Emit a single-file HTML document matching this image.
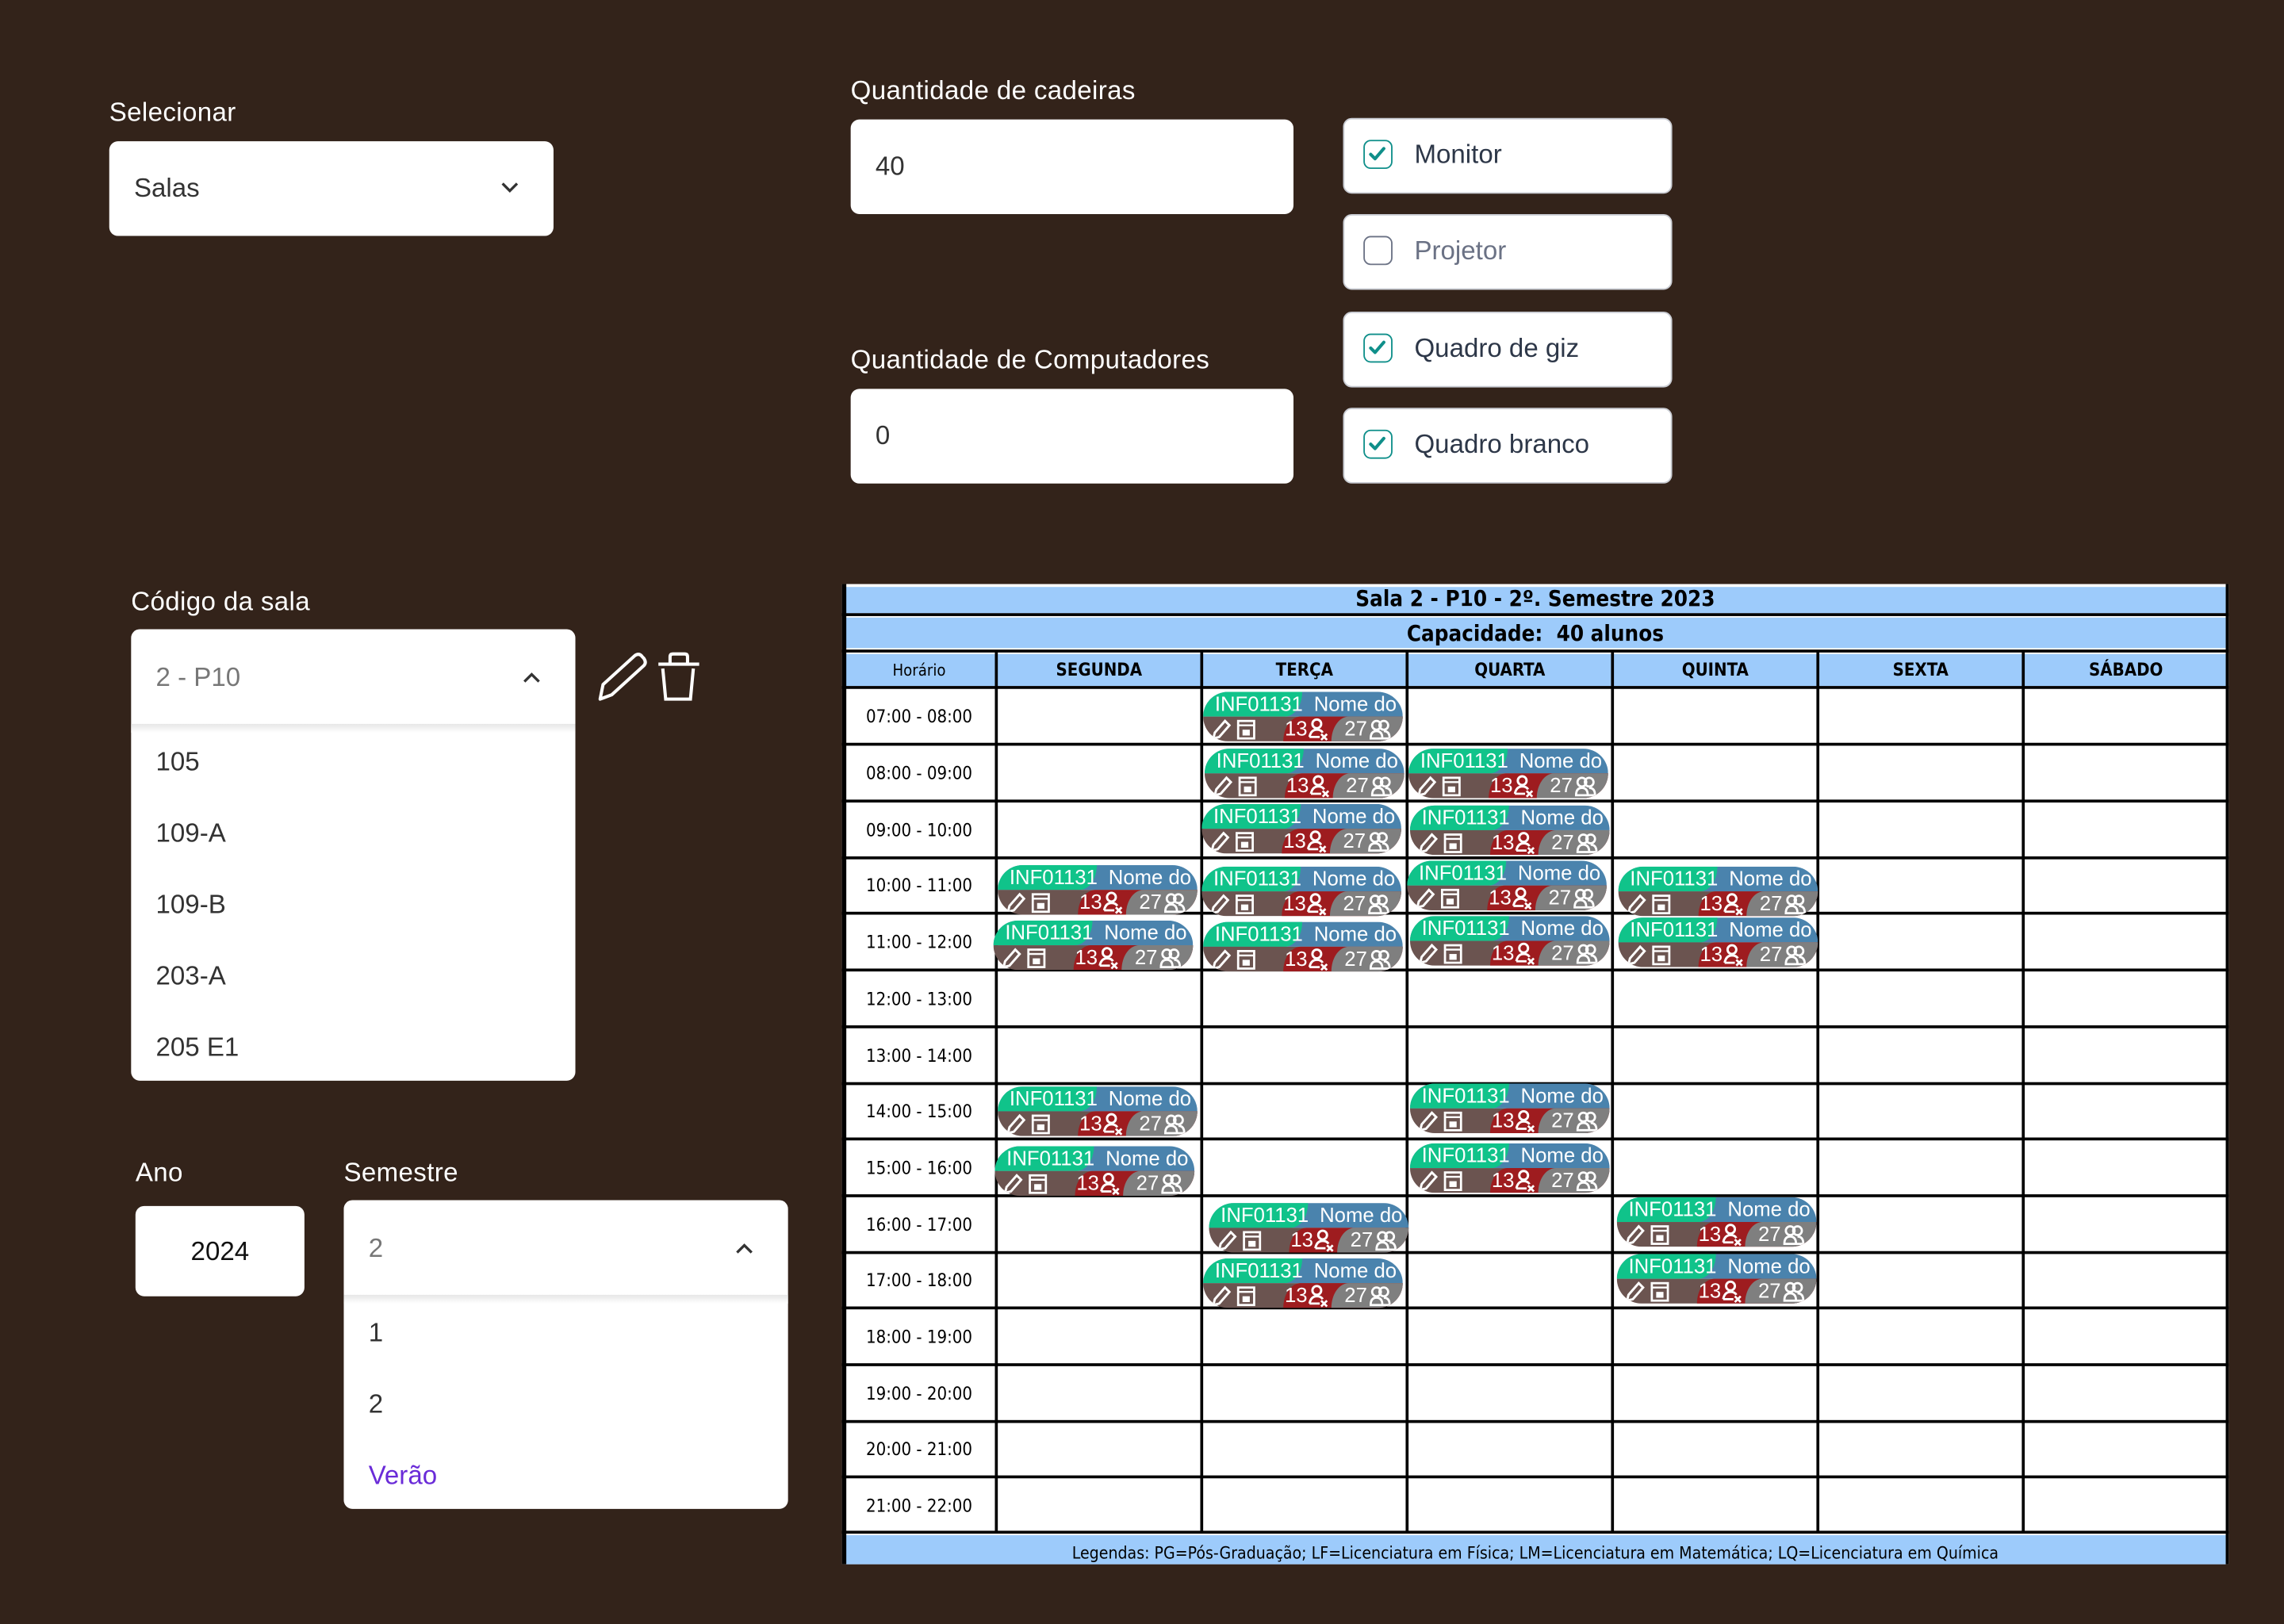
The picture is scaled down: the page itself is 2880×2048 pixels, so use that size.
<!DOCTYPE html>
<html><head><meta charset="utf-8"><style>
html,body{margin:0;padding:0;background:#33231a;width:2880px;height:2048px;overflow:hidden}
#w{position:absolute;left:0;top:0;width:1568px;height:1115px;transform:scale(1.836735);transform-origin:0 0;font-family:"Liberation Sans",sans-serif}
.a{position:absolute}
.lbl{position:absolute;color:#fff;font-size:18px;letter-spacing:.2px}
.box{position:absolute;background:#fff;border-radius:6px;box-sizing:border-box;color:#333;font-size:18px}
.chk{position:absolute;left:922px;width:226px;height:52px;background:#fff;border-radius:6px;border:1px solid #c9ccd3;box-sizing:border-box}
.chk .cb{position:absolute;left:13px;top:14px;width:20px;height:20px;border:1.5px solid #0f8f8a;border-radius:5px;box-sizing:border-box}
.chk .cb.off{border-color:#6b7285}
.chk span{position:absolute;left:48px;top:14px;font-size:18px;color:#2d3748}
.tbl{position:absolute;left:578px;top:401px;width:952px;height:673px;background:#fff}
.hl{position:absolute;background:#000}
.bl{position:absolute;background:#9dcbfb}
.tt{position:absolute;font-family:"DejaVu Sans Condensed","Liberation Sans Narrow",sans-serif;font-size:12px;color:#000;text-align:center}
.c{position:absolute;width:137px;height:34px;border-radius:17px;overflow:hidden;font-size:14px;color:#fff}
.c .t{position:absolute;left:0;top:0;width:100%;height:17px;background:#4a83ad}
.c .g{position:absolute;left:0;top:0;width:68px;height:17px;background:#10c38a;border-bottom-right-radius:12px 17px}
.c .t1{position:absolute;left:8px;top:0px}
.c .t2{position:absolute;left:76px;top:0px}
.c .bt{position:absolute;left:0;top:17px;width:100%;height:17px;background:#6b5450}
.c .r{position:absolute;left:55px;top:0;width:90px;height:17px;background:#9e1c1f;border-top-left-radius:12px 17px}
.c .gr{position:absolute;left:88px;top:0;width:60px;height:17px;background:#7f7f7f;border-top-left-radius:12px 17px}
.c .n1{position:absolute;left:56px;top:0px}
.c .n2{position:absolute;left:97px;top:0px}
.c svg{position:absolute}
</style></head><body><div id="w">
<svg width="0" height="0" style="position:absolute"><defs>
<g id="pen"><path d="M2 14 L3 10 L10 2 L13 5 L6 13 Z" fill="none" stroke="#fff" stroke-width="1.6"/></g>
<g id="lk"><rect x="1" y="1" width="11" height="12" fill="none" stroke="#fff" stroke-width="1.5"/><line x1="1" y1="4" x2="12" y2="4" stroke="#fff" stroke-width="1.3"/><rect x="4" y="7" width="5" height="4" fill="#fff"/></g>
<g id="p1"><circle cx="6" cy="4" r="3" fill="none" stroke="#fff" stroke-width="1.6"/><path d="M1 13 Q2 8 6 8 Q9 8 10 10" fill="none" stroke="#fff" stroke-width="1.6"/><path d="M1 13 H8 M9 11 L13 15 M13 11 L9 15" stroke="#fff" stroke-width="1.5"/></g>
<g id="p2"><circle cx="5" cy="4" r="3" fill="none" stroke="#fff" stroke-width="1.5"/><circle cx="10" cy="4" r="3" fill="none" stroke="#fff" stroke-width="1.5"/><path d="M1 13 Q1 8 5 8 Q9 8 9 13 Z M9 13 H14 Q14 8 10 8" fill="none" stroke="#fff" stroke-width="1.5"/></g>
</defs></svg>

<div class="lbl" style="left:75px;top:67px">Selecionar</div>
<div class="box" style="left:75px;top:97px;width:305px;height:65px"><span class="a" style="left:17px;top:22px">Salas</span>
<svg class="a" style="left:268px;top:27px" width="14" height="10"><path d="M2 2 L7 7 L12 2" fill="none" stroke="#333" stroke-width="1.8"/></svg></div>

<div class="lbl" style="left:584px;top:52px">Quantidade de cadeiras</div>
<div class="box" style="left:584px;top:82px;width:304px;height:65px"><span class="a" style="left:17px;top:22px">40</span></div>
<div class="lbl" style="left:584px;top:237px">Quantidade de Computadores</div>
<div class="box" style="left:584px;top:267px;width:304px;height:65px"><span class="a" style="left:17px;top:22px">0</span></div>

<div class="chk" style="top:81px"><div class="cb"><svg width="17" height="17" style="position:absolute;left:0;top:0"><path d="M4 9 L7 12 L13 5" fill="none" stroke="#0f8f8a" stroke-width="2.2" stroke-linecap="round" stroke-linejoin="round"/></svg></div><span>Monitor</span></div>
<div class="chk" style="top:147px"><div class="cb off"></div><span style="color:#6b7285">Projetor</span></div>
<div class="chk" style="top:214px"><div class="cb"><svg width="17" height="17" style="position:absolute;left:0;top:0"><path d="M4 9 L7 12 L13 5" fill="none" stroke="#0f8f8a" stroke-width="2.2" stroke-linecap="round" stroke-linejoin="round"/></svg></div><span>Quadro de giz</span></div>
<div class="chk" style="top:280px"><div class="cb"><svg width="17" height="17" style="position:absolute;left:0;top:0"><path d="M4 9 L7 12 L13 5" fill="none" stroke="#0f8f8a" stroke-width="2.2" stroke-linecap="round" stroke-linejoin="round"/></svg></div><span>Quadro branco</span></div>

<div class="lbl" style="left:90px;top:403px">Código da sala</div>
<div class="box" style="left:90px;top:432px;width:305px;height:310px;border-radius:6px"></div>
<div class="a" style="left:90px;top:497px;width:305px;height:6px;background:linear-gradient(#e6e6e6,#fff)"></div>
<span class="a" style="left:107px;top:455px;font-size:18px;color:#777">2 - P10</span>
<svg class="a" style="left:358px;top:460px" width="14" height="10"><path d="M2 8 L7 3 L12 8" fill="none" stroke="#333" stroke-width="1.8"/></svg>
<div class="a" style="left:107px;top:499px;font-size:18px;color:#333;line-height:49px">105<br>109-A<br>109-B<br>203-A<br>205 E1</div>
<svg class="a" style="left:408px;top:446px" width="80" height="40"><path d="M4 34 L6 24 L28 4 Q31 2 33 5 L34 6 Q36 9 34 11 L12 31 Z" fill="none" stroke="#fff" stroke-width="2.2" stroke-linejoin="round"/><path d="M44 10 H72 M52 10 V5 Q52 3 54 3 H62 Q64 3 64 5 V10 M47 13 L49 34 H66 L68 13" fill="none" stroke="#fff" stroke-width="2.2"/></svg>

<div class="lbl" style="left:93px;top:795px">Ano</div>
<div class="box" style="left:93px;top:828px;width:116px;height:62px;text-align:center;line-height:62px;color:#111">2024</div>
<div class="lbl" style="left:236px;top:795px">Semestre</div>
<div class="box" style="left:236px;top:824px;width:305px;height:212px"></div>
<div class="a" style="left:236px;top:889px;width:305px;height:6px;background:linear-gradient(#e6e6e6,#fff)"></div>
<span class="a" style="left:253px;top:847px;font-size:18px;color:#777">2</span>
<svg class="a" style="left:504px;top:852px" width="14" height="10"><path d="M2 8 L7 3 L12 8" fill="none" stroke="#333" stroke-width="1.8"/></svg>
<div class="a" style="left:253px;top:891px;font-size:18px;color:#333;line-height:49px">1<br>2<br><span style="color:#6a2bd8">Verão</span></div>

<div class="tbl">
<div class="bl" style="left:2px;top:2px;width:948px;height:18px"></div>
<div class="bl" style="left:2px;top:23px;width:948px;height:21px"></div>
<div class="bl" style="left:2px;top:48px;width:948px;height:22px"></div>
<div class="bl" style="left:2px;top:653px;width:948px;height:20px"></div>
</div>
<div class="tt" style="left:578px;top:402px;width:952px;font-weight:bold;font-size:15px">Sala 2 - P10 - 2º. Semestre 2023</div>
<div class="tt" style="left:578px;top:426px;width:952px;font-weight:bold;font-size:15px">Capacidade:&nbsp; 40 alunos</div>
<div class="tt" style="left:578px;top:454px;width:106px;font-size:11px">Horário</div>
<div class="tt" style="left:684px;top:453px;width:141px;font-weight:bold">SEGUNDA</div>
<div class="tt" style="left:825px;top:453px;width:141px;font-weight:bold">TERÇA</div>
<div class="tt" style="left:966px;top:453px;width:141px;font-weight:bold">QUARTA</div>
<div class="tt" style="left:1107px;top:453px;width:141px;font-weight:bold">QUINTA</div>
<div class="tt" style="left:1248px;top:453px;width:141px;font-weight:bold">SEXTA</div>
<div class="tt" style="left:1389px;top:453px;width:141px;font-weight:bold">SÁBADO</div>
<div class="tt" style="left:578px;top:1059px;width:952px;font-size:11.5px">Legendas: PG=Pós-Graduação; LF=Licenciatura em Física; LM=Licenciatura em Matemática; LQ=Licenciatura em Química</div>

<div class="hl" style="left:578px;top:421px;width:952px;height:2px"></div>
<div class="hl" style="left:578px;top:446px;width:952px;height:2px"></div>
<div class="hl" style="left:578px;top:471px;width:952px;height:2px"></div>
<div class="hl" style="left:578px;top:510px;width:952px;height:2px"></div>
<div class="hl" style="left:578px;top:549px;width:952px;height:2px"></div>
<div class="hl" style="left:578px;top:588px;width:952px;height:2px"></div>
<div class="hl" style="left:578px;top:626px;width:952px;height:2px"></div>
<div class="hl" style="left:578px;top:665px;width:952px;height:2px"></div>
<div class="hl" style="left:578px;top:704px;width:952px;height:2px"></div>
<div class="hl" style="left:578px;top:743px;width:952px;height:2px"></div>
<div class="hl" style="left:578px;top:781px;width:952px;height:2px"></div>
<div class="hl" style="left:578px;top:820px;width:952px;height:2px"></div>
<div class="hl" style="left:578px;top:859px;width:952px;height:2px"></div>
<div class="hl" style="left:578px;top:897px;width:952px;height:2px"></div>
<div class="hl" style="left:578px;top:936px;width:952px;height:2px"></div>
<div class="hl" style="left:578px;top:975px;width:952px;height:2px"></div>
<div class="hl" style="left:578px;top:1013px;width:952px;height:2px"></div>
<div class="hl" style="left:578px;top:1051px;width:952px;height:2px"></div>
<div class="hl" style="left:578px;top:401px;width:3px;height:673px"></div>
<div class="hl" style="left:1528px;top:401px;width:2px;height:673px"></div>
<div class="hl" style="left:683px;top:447px;width:2px;height:605px"></div>
<div class="hl" style="left:824px;top:447px;width:2px;height:605px"></div>
<div class="hl" style="left:965px;top:447px;width:2px;height:605px"></div>
<div class="hl" style="left:1106px;top:447px;width:2px;height:605px"></div>
<div class="hl" style="left:1247px;top:447px;width:2px;height:605px"></div>
<div class="hl" style="left:1388px;top:447px;width:2px;height:605px"></div>

<div class="tt" style="left:578px;top:485px;width:106px">07:00 - 08:00</div>
<div class="tt" style="left:578px;top:524px;width:106px">08:00 - 09:00</div>
<div class="tt" style="left:578px;top:563px;width:106px">09:00 - 10:00</div>
<div class="tt" style="left:578px;top:601px;width:106px">10:00 - 11:00</div>
<div class="tt" style="left:578px;top:640px;width:106px">11:00 - 12:00</div>
<div class="tt" style="left:578px;top:679px;width:106px">12:00 - 13:00</div>
<div class="tt" style="left:578px;top:718px;width:106px">13:00 - 14:00</div>
<div class="tt" style="left:578px;top:756px;width:106px">14:00 - 15:00</div>
<div class="tt" style="left:578px;top:795px;width:106px">15:00 - 16:00</div>
<div class="tt" style="left:578px;top:834px;width:106px">16:00 - 17:00</div>
<div class="tt" style="left:578px;top:872px;width:106px">17:00 - 18:00</div>
<div class="tt" style="left:578px;top:911px;width:106px">18:00 - 19:00</div>
<div class="tt" style="left:578px;top:950px;width:106px">19:00 - 20:00</div>
<div class="tt" style="left:578px;top:988px;width:106px">20:00 - 21:00</div>
<div class="tt" style="left:578px;top:1027px;width:106px">21:00 - 22:00</div>

<div class="c" style="left:826px;top:475px"><div class="t"><div class="g"></div><span class="t1">INF01131</span><span class="t2">Nome do</span></div><div class="bt"><div class="r"></div><div class="gr"></div><svg style="left:5px;top:1px" width="15" height="16"><use href="#pen"/></svg><svg style="left:23px;top:2px" width="14" height="15"><use href="#lk"/></svg><span class="n1">13</span><svg style="left:72px;top:1px" width="15" height="16"><use href="#p1"/></svg><span class="n2">27</span><svg style="left:114px;top:2px" width="15" height="15"><use href="#p2"/></svg></div></div>
<div class="c" style="left:827px;top:514px"><div class="t"><div class="g"></div><span class="t1">INF01131</span><span class="t2">Nome do</span></div><div class="bt"><div class="r"></div><div class="gr"></div><svg style="left:5px;top:1px" width="15" height="16"><use href="#pen"/></svg><svg style="left:23px;top:2px" width="14" height="15"><use href="#lk"/></svg><span class="n1">13</span><svg style="left:72px;top:1px" width="15" height="16"><use href="#p1"/></svg><span class="n2">27</span><svg style="left:114px;top:2px" width="15" height="15"><use href="#p2"/></svg></div></div>
<div class="c" style="left:825px;top:552px"><div class="t"><div class="g"></div><span class="t1">INF01131</span><span class="t2">Nome do</span></div><div class="bt"><div class="r"></div><div class="gr"></div><svg style="left:5px;top:1px" width="15" height="16"><use href="#pen"/></svg><svg style="left:23px;top:2px" width="14" height="15"><use href="#lk"/></svg><span class="n1">13</span><svg style="left:72px;top:1px" width="15" height="16"><use href="#p1"/></svg><span class="n2">27</span><svg style="left:114px;top:2px" width="15" height="15"><use href="#p2"/></svg></div></div>
<div class="c" style="left:825px;top:595px"><div class="t"><div class="g"></div><span class="t1">INF01131</span><span class="t2">Nome do</span></div><div class="bt"><div class="r"></div><div class="gr"></div><svg style="left:5px;top:1px" width="15" height="16"><use href="#pen"/></svg><svg style="left:23px;top:2px" width="14" height="15"><use href="#lk"/></svg><span class="n1">13</span><svg style="left:72px;top:1px" width="15" height="16"><use href="#p1"/></svg><span class="n2">27</span><svg style="left:114px;top:2px" width="15" height="15"><use href="#p2"/></svg></div></div>
<div class="c" style="left:826px;top:633px"><div class="t"><div class="g"></div><span class="t1">INF01131</span><span class="t2">Nome do</span></div><div class="bt"><div class="r"></div><div class="gr"></div><svg style="left:5px;top:1px" width="15" height="16"><use href="#pen"/></svg><svg style="left:23px;top:2px" width="14" height="15"><use href="#lk"/></svg><span class="n1">13</span><svg style="left:72px;top:1px" width="15" height="16"><use href="#p1"/></svg><span class="n2">27</span><svg style="left:114px;top:2px" width="15" height="15"><use href="#p2"/></svg></div></div>
<div class="c" style="left:830px;top:826px"><div class="t"><div class="g"></div><span class="t1">INF01131</span><span class="t2">Nome do</span></div><div class="bt"><div class="r"></div><div class="gr"></div><svg style="left:5px;top:1px" width="15" height="16"><use href="#pen"/></svg><svg style="left:23px;top:2px" width="14" height="15"><use href="#lk"/></svg><span class="n1">13</span><svg style="left:72px;top:1px" width="15" height="16"><use href="#p1"/></svg><span class="n2">27</span><svg style="left:114px;top:2px" width="15" height="15"><use href="#p2"/></svg></div></div>
<div class="c" style="left:826px;top:864px"><div class="t"><div class="g"></div><span class="t1">INF01131</span><span class="t2">Nome do</span></div><div class="bt"><div class="r"></div><div class="gr"></div><svg style="left:5px;top:1px" width="15" height="16"><use href="#pen"/></svg><svg style="left:23px;top:2px" width="14" height="15"><use href="#lk"/></svg><span class="n1">13</span><svg style="left:72px;top:1px" width="15" height="16"><use href="#p1"/></svg><span class="n2">27</span><svg style="left:114px;top:2px" width="15" height="15"><use href="#p2"/></svg></div></div>

<div class="c" style="left:685px;top:594px"><div class="t"><div class="g"></div><span class="t1">INF01131</span><span class="t2">Nome do</span></div><div class="bt"><div class="r"></div><div class="gr"></div><svg style="left:5px;top:1px" width="15" height="16"><use href="#pen"/></svg><svg style="left:23px;top:2px" width="14" height="15"><use href="#lk"/></svg><span class="n1">13</span><svg style="left:72px;top:1px" width="15" height="16"><use href="#p1"/></svg><span class="n2">27</span><svg style="left:114px;top:2px" width="15" height="15"><use href="#p2"/></svg></div></div>
<div class="c" style="left:682px;top:632px"><div class="t"><div class="g"></div><span class="t1">INF01131</span><span class="t2">Nome do</span></div><div class="bt"><div class="r"></div><div class="gr"></div><svg style="left:5px;top:1px" width="15" height="16"><use href="#pen"/></svg><svg style="left:23px;top:2px" width="14" height="15"><use href="#lk"/></svg><span class="n1">13</span><svg style="left:72px;top:1px" width="15" height="16"><use href="#p1"/></svg><span class="n2">27</span><svg style="left:114px;top:2px" width="15" height="15"><use href="#p2"/></svg></div></div>
<div class="c" style="left:685px;top:746px"><div class="t"><div class="g"></div><span class="t1">INF01131</span><span class="t2">Nome do</span></div><div class="bt"><div class="r"></div><div class="gr"></div><svg style="left:5px;top:1px" width="15" height="16"><use href="#pen"/></svg><svg style="left:23px;top:2px" width="14" height="15"><use href="#lk"/></svg><span class="n1">13</span><svg style="left:72px;top:1px" width="15" height="16"><use href="#p1"/></svg><span class="n2">27</span><svg style="left:114px;top:2px" width="15" height="15"><use href="#p2"/></svg></div></div>
<div class="c" style="left:683px;top:787px"><div class="t"><div class="g"></div><span class="t1">INF01131</span><span class="t2">Nome do</span></div><div class="bt"><div class="r"></div><div class="gr"></div><svg style="left:5px;top:1px" width="15" height="16"><use href="#pen"/></svg><svg style="left:23px;top:2px" width="14" height="15"><use href="#lk"/></svg><span class="n1">13</span><svg style="left:72px;top:1px" width="15" height="16"><use href="#p1"/></svg><span class="n2">27</span><svg style="left:114px;top:2px" width="15" height="15"><use href="#p2"/></svg></div></div>

<div class="c" style="left:967px;top:514px"><div class="t"><div class="g"></div><span class="t1">INF01131</span><span class="t2">Nome do</span></div><div class="bt"><div class="r"></div><div class="gr"></div><svg style="left:5px;top:1px" width="15" height="16"><use href="#pen"/></svg><svg style="left:23px;top:2px" width="14" height="15"><use href="#lk"/></svg><span class="n1">13</span><svg style="left:72px;top:1px" width="15" height="16"><use href="#p1"/></svg><span class="n2">27</span><svg style="left:114px;top:2px" width="15" height="15"><use href="#p2"/></svg></div></div>
<div class="c" style="left:968px;top:553px"><div class="t"><div class="g"></div><span class="t1">INF01131</span><span class="t2">Nome do</span></div><div class="bt"><div class="r"></div><div class="gr"></div><svg style="left:5px;top:1px" width="15" height="16"><use href="#pen"/></svg><svg style="left:23px;top:2px" width="14" height="15"><use href="#lk"/></svg><span class="n1">13</span><svg style="left:72px;top:1px" width="15" height="16"><use href="#p1"/></svg><span class="n2">27</span><svg style="left:114px;top:2px" width="15" height="15"><use href="#p2"/></svg></div></div>
<div class="c" style="left:966px;top:591px"><div class="t"><div class="g"></div><span class="t1">INF01131</span><span class="t2">Nome do</span></div><div class="bt"><div class="r"></div><div class="gr"></div><svg style="left:5px;top:1px" width="15" height="16"><use href="#pen"/></svg><svg style="left:23px;top:2px" width="14" height="15"><use href="#lk"/></svg><span class="n1">13</span><svg style="left:72px;top:1px" width="15" height="16"><use href="#p1"/></svg><span class="n2">27</span><svg style="left:114px;top:2px" width="15" height="15"><use href="#p2"/></svg></div></div>
<div class="c" style="left:968px;top:629px"><div class="t"><div class="g"></div><span class="t1">INF01131</span><span class="t2">Nome do</span></div><div class="bt"><div class="r"></div><div class="gr"></div><svg style="left:5px;top:1px" width="15" height="16"><use href="#pen"/></svg><svg style="left:23px;top:2px" width="14" height="15"><use href="#lk"/></svg><span class="n1">13</span><svg style="left:72px;top:1px" width="15" height="16"><use href="#p1"/></svg><span class="n2">27</span><svg style="left:114px;top:2px" width="15" height="15"><use href="#p2"/></svg></div></div>
<div class="c" style="left:968px;top:744px"><div class="t"><div class="g"></div><span class="t1">INF01131</span><span class="t2">Nome do</span></div><div class="bt"><div class="r"></div><div class="gr"></div><svg style="left:5px;top:1px" width="15" height="16"><use href="#pen"/></svg><svg style="left:23px;top:2px" width="14" height="15"><use href="#lk"/></svg><span class="n1">13</span><svg style="left:72px;top:1px" width="15" height="16"><use href="#p1"/></svg><span class="n2">27</span><svg style="left:114px;top:2px" width="15" height="15"><use href="#p2"/></svg></div></div>
<div class="c" style="left:968px;top:785px"><div class="t"><div class="g"></div><span class="t1">INF01131</span><span class="t2">Nome do</span></div><div class="bt"><div class="r"></div><div class="gr"></div><svg style="left:5px;top:1px" width="15" height="16"><use href="#pen"/></svg><svg style="left:23px;top:2px" width="14" height="15"><use href="#lk"/></svg><span class="n1">13</span><svg style="left:72px;top:1px" width="15" height="16"><use href="#p1"/></svg><span class="n2">27</span><svg style="left:114px;top:2px" width="15" height="15"><use href="#p2"/></svg></div></div>

<div class="c" style="left:1111px;top:595px"><div class="t"><div class="g"></div><span class="t1">INF01131</span><span class="t2">Nome do</span></div><div class="bt"><div class="r"></div><div class="gr"></div><svg style="left:5px;top:1px" width="15" height="16"><use href="#pen"/></svg><svg style="left:23px;top:2px" width="14" height="15"><use href="#lk"/></svg><span class="n1">13</span><svg style="left:72px;top:1px" width="15" height="16"><use href="#p1"/></svg><span class="n2">27</span><svg style="left:114px;top:2px" width="15" height="15"><use href="#p2"/></svg></div></div>
<div class="c" style="left:1111px;top:630px"><div class="t"><div class="g"></div><span class="t1">INF01131</span><span class="t2">Nome do</span></div><div class="bt"><div class="r"></div><div class="gr"></div><svg style="left:5px;top:1px" width="15" height="16"><use href="#pen"/></svg><svg style="left:23px;top:2px" width="14" height="15"><use href="#lk"/></svg><span class="n1">13</span><svg style="left:72px;top:1px" width="15" height="16"><use href="#p1"/></svg><span class="n2">27</span><svg style="left:114px;top:2px" width="15" height="15"><use href="#p2"/></svg></div></div>
<div class="c" style="left:1110px;top:822px"><div class="t"><div class="g"></div><span class="t1">INF01131</span><span class="t2">Nome do</span></div><div class="bt"><div class="r"></div><div class="gr"></div><svg style="left:5px;top:1px" width="15" height="16"><use href="#pen"/></svg><svg style="left:23px;top:2px" width="14" height="15"><use href="#lk"/></svg><span class="n1">13</span><svg style="left:72px;top:1px" width="15" height="16"><use href="#p1"/></svg><span class="n2">27</span><svg style="left:114px;top:2px" width="15" height="15"><use href="#p2"/></svg></div></div>
<div class="c" style="left:1110px;top:861px"><div class="t"><div class="g"></div><span class="t1">INF01131</span><span class="t2">Nome do</span></div><div class="bt"><div class="r"></div><div class="gr"></div><svg style="left:5px;top:1px" width="15" height="16"><use href="#pen"/></svg><svg style="left:23px;top:2px" width="14" height="15"><use href="#lk"/></svg><span class="n1">13</span><svg style="left:72px;top:1px" width="15" height="16"><use href="#p1"/></svg><span class="n2">27</span><svg style="left:114px;top:2px" width="15" height="15"><use href="#p2"/></svg></div></div>
</div></body></html>
